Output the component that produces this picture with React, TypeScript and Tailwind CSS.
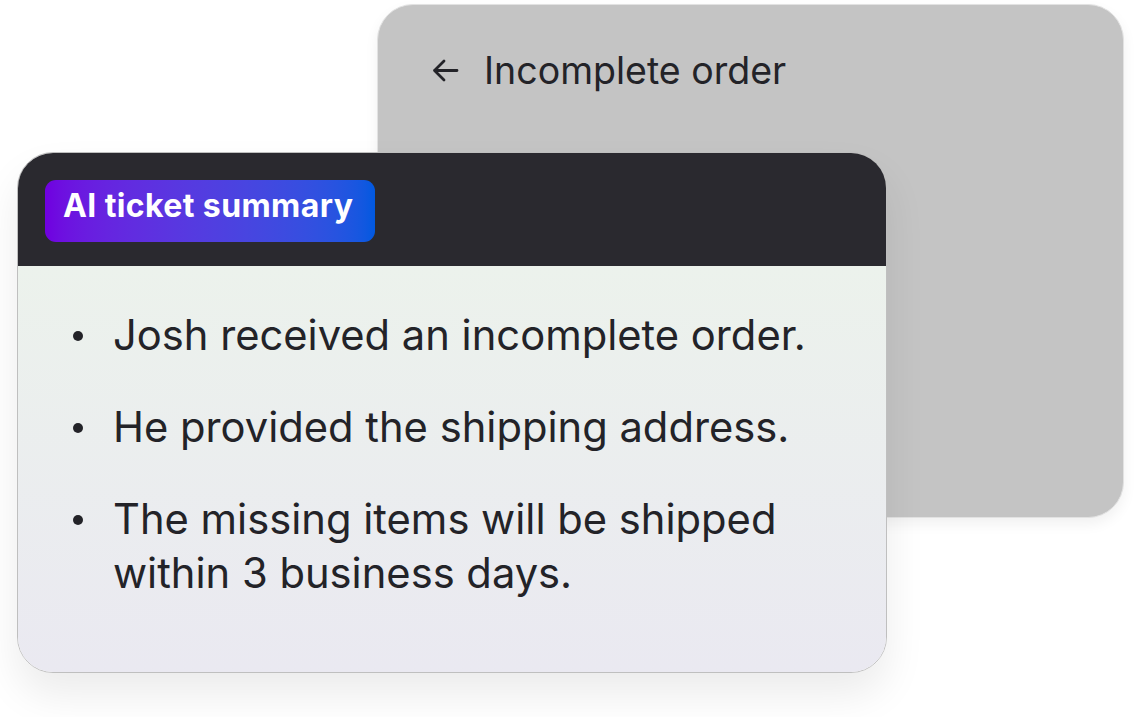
const points = [
  'Josh received an incomplete order.',
  'He provided the shipping address.',
  'The missing items will be shipped within 3 business days.',
];

export default function App() {
  return (
    <div className="relative w-[1142px] h-[717px] bg-white overflow-hidden font-['Inter',sans-serif] text-[#232328]">
      <div className="ml-[377px] mt-[4px] w-[747px] h-[514px] rounded-[36px] bg-[#c4c4c4] border border-[#e2e2e2] shadow-[0_6px_14px_rgba(0,0,0,0.06)]">
        <div className="flex items-center pl-[54px] pt-[47px] gap-[25px]">
          <svg width="27" height="23" viewBox="0 0 27 23" fill="none" stroke="currentColor" strokeWidth="2.8" strokeLinecap="round" strokeLinejoin="round">
            <path d="M12 2 L2.5 11.5 L12 21 M2.5 11.5 H25" />
          </svg>
          <span className="text-[37.5px] leading-none">Incomplete order</span>
        </div>
      </div>

      <div className="absolute left-[17px] top-[152px] w-[870px] h-[521px] rounded-[36px] border-[1.5px] border-[#bfbfbf] overflow-hidden flex flex-col shadow-[0_22px_40px_rgba(0,0,0,0.08)]">
        <div className="h-[113px] bg-[#2a292f] shrink-0 pl-[27px] pt-[27px]">
          <div className="inline-flex items-center h-[62px] w-[330px] pl-[18px] pb-[10px] rounded-[11px] bg-gradient-to-r from-[#7000e0] to-[#0059e0] text-white font-bold text-[32px] tracking-[0.4px]">
            AI ticket summary
          </div>
        </div>
        <div className="flex-1 bg-gradient-to-b from-[#ecf2ec] to-[#eae9f1] pt-[42px] pl-[53px] pr-[50px]">
          <ul className="flex flex-col gap-[38px]">
            {points.map((p) => (
              <li key={p} className="flex gap-[28px] text-[41.7px] leading-[54px]">
                <span className="w-[14px] shrink-0 flex justify-center pt-[23px]">
                  <span className="w-[10px] h-[10px] rounded-full bg-[#232328]" />
                </span>
                <span className="max-w-[710px]">{p}</span>
              </li>
            ))}
          </ul>
        </div>
      </div>
    </div>
  );
}
